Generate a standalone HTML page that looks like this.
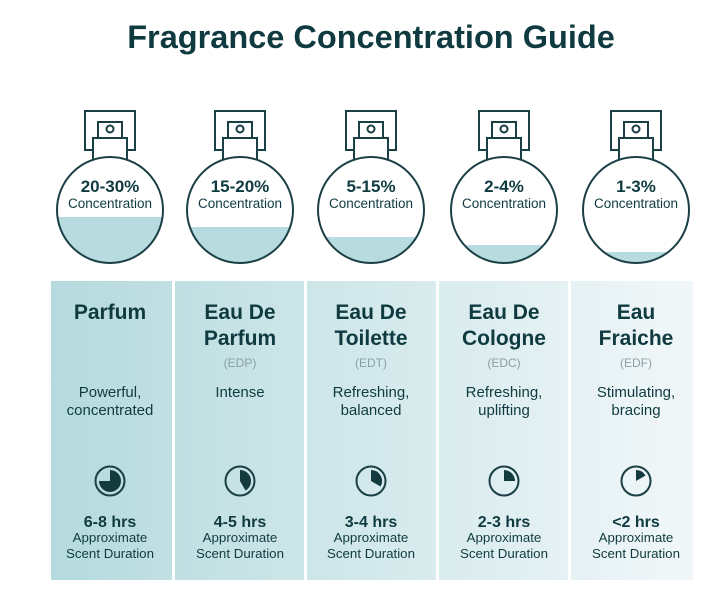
<!DOCTYPE html><html><head><style>body{margin:0;background:#fff}svg text{font-family:"Liberation Sans",sans-serif;fill:#0f3b40;text-anchor:middle}.b{fill:none;stroke:#1a3f44;stroke-width:2}.w{fill:#fff;stroke:#1a3f44;stroke-width:2}.t{font-size:16px;font-weight:bold}.p{font-size:17px;font-weight:bold}.c{font-size:13.5px}.n{font-size:21px;font-weight:bold}.a{font-size:12px;fill:#8a9fa2 !important}.d{font-size:15px}.s{font-size:13.3px}</style></head><body>
<svg width="727" height="605" viewBox="0 0 727 605" xmlns="http://www.w3.org/2000/svg">
<defs>
<linearGradient id="g" x1="0" x2="1"><stop offset="0" stop-color="#b5dadd"/><stop offset="1" stop-color="#f1f7f9"/></linearGradient>
<g id="top">
<rect x="-25" y="111" width="50" height="39" class="b"/>
<rect x="-17" y="138" width="34" height="22" class="w"/>
<rect x="-12" y="122" width="24" height="16" class="w"/>
<circle cx="0" cy="129" r="3.5" class="b" stroke-width="1.8"/>
</g>
<g id="bt">
<circle cx="0" cy="210" r="53" class="b"/>
<text x="0" y="208" class="c">Concentration</text>
<circle cx="0" cy="481" r="14.5" class="b"/>
<text x="0" y="542" class="s">Approximate</text>
<text x="0" y="558" class="s">Scent Duration</text>
</g>
</defs>
<text x="371" y="48" font-size="32.5" font-weight="bold">Fragrance Concentration Guide</text>
<rect x="51" y="281" width="642" height="299" fill="url(#g)"/>
<g fill="#fff"><rect x="172" y="281" width="3" height="299"/><rect x="304" y="281" width="3" height="299"/><rect x="436" y="281" width="3" height="299"/><rect x="568" y="281" width="3" height="299"/></g>

<g transform="translate(110,0)">
<use href="#top"/>
<circle cx="0" cy="210" r="53" fill="#fff"/>
<path d="M-52.54 217 L52.54 217 A53 53 0 0 1 -52.54 217Z" fill="#b7dbdf"/>
<use href="#bt"/>
<text x="0" y="192" class="p">20-30%</text>
<text x="0" y="319" class="n">Parfum</text>
<text x="0" y="397" class="d">Powerful,</text><text x="0" y="415" class="d">concentrated</text>
<path d="M0 481 L0 470 A11 11 0 1 1 -11 481Z" fill="#123a3f"/>
<text x="0" y="527" class="t">6-8 hrs</text>
</g>

<g transform="translate(240,0)">
<use href="#top"/>
<circle cx="0" cy="210" r="53" fill="#fff"/>
<path d="M-50.2 227 L50.2 227 A53 53 0 0 1 -50.2 227Z" fill="#b7dbdf"/>
<use href="#bt"/>
<text x="0" y="192" class="p">15-20%</text>
<text x="0" y="319" class="n">Eau De</text><text x="0" y="345" class="n">Parfum</text>
<text x="0" y="367" class="a">(EDP)</text>
<text x="0" y="397" class="d">Intense</text>
<path d="M0 481 L0 470 A11 11 0 0 1 5.5 490.53Z" fill="#123a3f"/>
<text x="0" y="527" class="t">4-5 hrs</text>
</g>

<g transform="translate(371,0)">
<use href="#top"/>
<circle cx="0" cy="210" r="53" fill="#fff"/>
<path d="M-45.61 237 L45.61 237 A53 53 0 0 1 -45.61 237Z" fill="#b7dbdf"/>
<use href="#bt"/>
<text x="0" y="192" class="p">5-15%</text>
<text x="0" y="319" class="n">Eau De</text><text x="0" y="345" class="n">Toilette</text>
<text x="0" y="367" class="a">(EDT)</text>
<text x="0" y="397" class="d">Refreshing,</text><text x="0" y="415" class="d">balanced</text>
<path d="M0 481 L0 470 A11 11 0 0 1 9.53 486.5Z" fill="#123a3f"/>
<text x="0" y="527" class="t">3-4 hrs</text>
</g>

<g transform="translate(504,0)">
<use href="#top"/>
<circle cx="0" cy="210" r="53" fill="#fff"/>
<path d="M-39.8 245 L39.8 245 A53 53 0 0 1 -39.8 245Z" fill="#b7dbdf"/>
<use href="#bt"/>
<text x="0" y="192" class="p">2-4%</text>
<text x="0" y="319" class="n">Eau De</text><text x="0" y="345" class="n">Cologne</text>
<text x="0" y="367" class="a">(EDC)</text>
<text x="0" y="397" class="d">Refreshing,</text><text x="0" y="415" class="d">uplifting</text>
<path d="M0 481 L0 470 A11 11 0 0 1 11 481Z" fill="#123a3f"/>
<text x="0" y="527" class="t">2-3 hrs</text>
</g>

<g transform="translate(636,0)">
<use href="#top"/>
<circle cx="0" cy="210" r="53" fill="#fff"/>
<path d="M-32.33 252 L32.33 252 A53 53 0 0 1 -32.33 252Z" fill="#b7dbdf"/>
<use href="#bt"/>
<text x="0" y="192" class="p">1-3%</text>
<text x="0" y="319" class="n">Eau</text><text x="0" y="345" class="n">Fraiche</text>
<text x="0" y="367" class="a">(EDF)</text>
<text x="0" y="397" class="d">Stimulating,</text><text x="0" y="415" class="d">bracing</text>
<path d="M0 481 L0 470 A11 11 0 0 1 9.53 475.5Z" fill="#123a3f"/>
<text x="0" y="527" class="t">&lt;2 hrs</text>
</g>
</svg>
</body></html>
